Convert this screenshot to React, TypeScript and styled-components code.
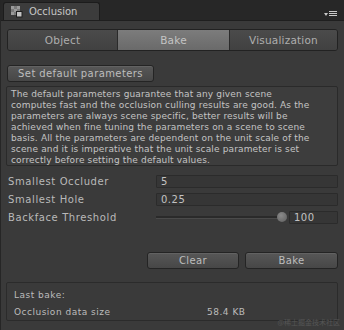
import styled, { createGlobalStyle } from "styled-components";

const GlobalStyle = createGlobalStyle`
  body {
    margin: 0;
    background: #3a3a3a;
    font-family: "DejaVu Sans", "Liberation Sans", sans-serif;
  }
`;

const Window = styled.div`
  position: relative;
  width: 344px;
  height: 330px;
  background: #3a3a3a;
  box-sizing: border-box;
  border-left: 1px solid #262626;
  overflow: hidden;
`;

const Header = styled.div`
  display: flex;
  align-items: flex-end;
  height: 21px;
  background: #272727;
  border-bottom: 1px solid #1f1f1f;
  box-sizing: border-box;
`;

const HeaderTab = styled.div`
  display: flex;
  align-items: center;
  gap: 6px;
  margin-left: 2px;
  width: 97px;
  height: 18px;
  padding-left: 7px;
  box-sizing: border-box;
  background: #3c3c3c;
  border: 1px solid #1c1c1c;
  border-bottom: none;
  border-radius: 3px 3px 0 0;
  color: #c6c6c6;
  font-size: 10px;
`;

const MenuIcon = styled.svg`
  margin-left: auto;
  margin-right: 7px;
  margin-bottom: 3px;
`;

const Content = styled.div`
  display: flex;
  flex-direction: column;
  padding: 0 6px 0 5px;
`;

const Toolbar = styled.div`
  display: grid;
  grid-template-columns: 110px 112px 1fr;
  margin: 8px 0 0 1px;
  height: 20px;
  border: 1px solid #222;
  border-radius: 3px;
  overflow: hidden;
`;

const Segment = styled.div<{ selected?: boolean }>`
  display: flex;
  align-items: center;
  justify-content: center;
  font-size: 10.5px;
  letter-spacing: 0.2px;
  color: ${({ selected }) => (selected ? "#c4c4c4" : "#aeaeae")};
  background: ${({ selected }) =>
    selected
      ? "linear-gradient(#7c7c7c, #6a6a6a)"
      : "linear-gradient(#4b4b4b, #414141)"};
  border-right: 1px solid #2a2a2a;
  &:last-child {
    border-right: none;
  }
`;

const Button = styled.div<{ w: number }>`
  display: flex;
  align-items: center;
  justify-content: center;
  width: ${({ w }) => w}px;
  height: 17px;
  box-sizing: border-box;
  border: 1px solid #242424;
  border-radius: 3px;
  background: linear-gradient(#575757, #474747);
  box-shadow: inset 0 1px 0 #626262;
  color: #bdbdbd;
  font-size: 10px;
  letter-spacing: 0.4px;
`;

const DefaultsButton = styled(Button)`
  margin: 14px 0 0 1px;
`;

const HelpBox = styled.div`
  margin-top: 4px;
  height: 80px;
  box-sizing: border-box;
  padding: 2px 4px;
  background: #3d3d3d;
  border: 1px solid #2a2a2a;
  border-radius: 2px;
  color: #c4c4c4;
  font-size: 9px;
  line-height: 11px;
  letter-spacing: 0.15px;
  white-space: nowrap;
`;

const Rows = styled.div`
  display: flex;
  flex-direction: column;
  gap: 5px;
  margin-top: 9px;
`;

const Row = styled.div`
  display: grid;
  grid-template-columns: 150px 1fr;
  align-items: center;
  height: 13px;
`;

const Label = styled.div`
  padding-left: 2px;
  color: #b9b9b9;
  font-size: 10px;
  letter-spacing: 0.6px;
`;

const Field = styled.div`
  height: 13px;
  box-sizing: border-box;
  padding-left: 4px;
  display: flex;
  align-items: center;
  background: #363636;
  border: 1px solid #2b2b2b;
  border-radius: 1px;
  color: #c2c2c2;
  font-size: 10px;
  letter-spacing: 0.5px;
`;

const SliderWrap = styled.div`
  display: flex;
  align-items: center;
  gap: 2px;
`;

const Track = styled.div`
  position: relative;
  flex: 1;
  height: 2px;
  background: #2a2a2a;
  border-bottom: 1px solid #4a4a4a;
`;

const Knob = styled.div`
  position: absolute;
  right: 0;
  top: -4px;
  width: 10px;
  height: 10px;
  border-radius: 50%;
  background: radial-gradient(circle at 40% 35%, #8a8a8a, #5e5e5e);
`;

const NumberField = styled(Field)`
  width: 49px;
  flex: none;
`;

const ButtonRow = styled.div`
  display: flex;
  justify-content: flex-end;
  gap: 6px;
  margin-top: 28px;
`;

const InfoBox = styled.div`
  display: flex;
  flex-direction: column;
  gap: 5px;
  margin-top: 13px;
  height: 39px;
  box-sizing: border-box;
  padding: 6px 7px 0;
  border: 1px solid #2b2b2b;
  border-radius: 2px;
  background: #3a3a3a;
  color: #bcbcbc;
  font-size: 9px;
  letter-spacing: 0.5px;
`;

const InfoRow = styled.div`
  display: grid;
  grid-template-columns: 193px 1fr;
  height: 12px;
  align-items: center;
`;

const Watermark = styled.div`
  position: absolute;
  right: 4px;
  bottom: 3px;
  color: #555;
  font-size: 7px;
  font-family: "Noto Sans CJK SC", sans-serif;
`;

const OcclusionIcon = () => (
  <svg width="12" height="12" viewBox="0 0 12 12">
    <rect x="0" y="0" width="9" height="9" fill="#7a7a7a" />
    <rect x="0" y="0" width="3" height="3" fill="#9a9a9a" />
    <rect x="6" y="0" width="3" height="3" fill="#9a9a9a" />
    <rect x="3" y="3" width="3" height="3" fill="#9a9a9a" />
    <rect x="0" y="6" width="3" height="3" fill="#9a9a9a" />
    <rect x="5.5" y="5.5" width="5.5" height="5.5" fill="#c4c4c4" stroke="#1e1e1e" />
  </svg>
);

export default function App() {
  return (
    <Window>
      <GlobalStyle />
      <Header>
        <HeaderTab>
          <OcclusionIcon />
          Occlusion
        </HeaderTab>
        <MenuIcon width="13" height="6" viewBox="0 0 13 6">
          <path d="M0 2h4l-2 3z" fill="#c8c8c8" />
          <rect x="5" y="0" width="8" height="1" fill="#c8c8c8" />
          <rect x="5" y="2" width="8" height="1" fill="#c8c8c8" />
          <rect x="5" y="4" width="8" height="1" fill="#c8c8c8" />
        </MenuIcon>
      </Header>
      <Content>
        <Toolbar>
          <Segment>Object</Segment>
          <Segment selected>Bake</Segment>
          <Segment>Visualization</Segment>
        </Toolbar>
        <DefaultsButton w={147}>Set default parameters</DefaultsButton>
        <HelpBox>
          The default parameters guarantee that any given scene
          <br />
          computes fast and the occlusion culling results are good. As the
          <br />
          parameters are always scene specific, better results will be
          <br />
          achieved when fine tuning the parameters on a scene to scene
          <br />
          basis. All the parameters are dependent on the unit scale of the
          <br />
          scene and it is imperative that the unit scale parameter is set
          <br />
          correctly before setting the default values.
        </HelpBox>
        <Rows>
          <Row>
            <Label>Smallest Occluder</Label>
            <Field>5</Field>
          </Row>
          <Row>
            <Label>Smallest Hole</Label>
            <Field>0.25</Field>
          </Row>
          <Row>
            <Label>Backface Threshold</Label>
            <SliderWrap>
              <Track>
                <Knob />
              </Track>
              <NumberField>100</NumberField>
            </SliderWrap>
          </Row>
        </Rows>
        <ButtonRow>
          <Button w={92}>Clear</Button>
          <Button w={93}>Bake</Button>
        </ButtonRow>
        <InfoBox>
          <InfoRow>Last bake:</InfoRow>
          <InfoRow>
            <span>Occlusion data size</span>
            <span>58.4 KB</span>
          </InfoRow>
        </InfoBox>
      </Content>
      <Watermark>@稀土掘金技术社区</Watermark>
    </Window>
  );
}
